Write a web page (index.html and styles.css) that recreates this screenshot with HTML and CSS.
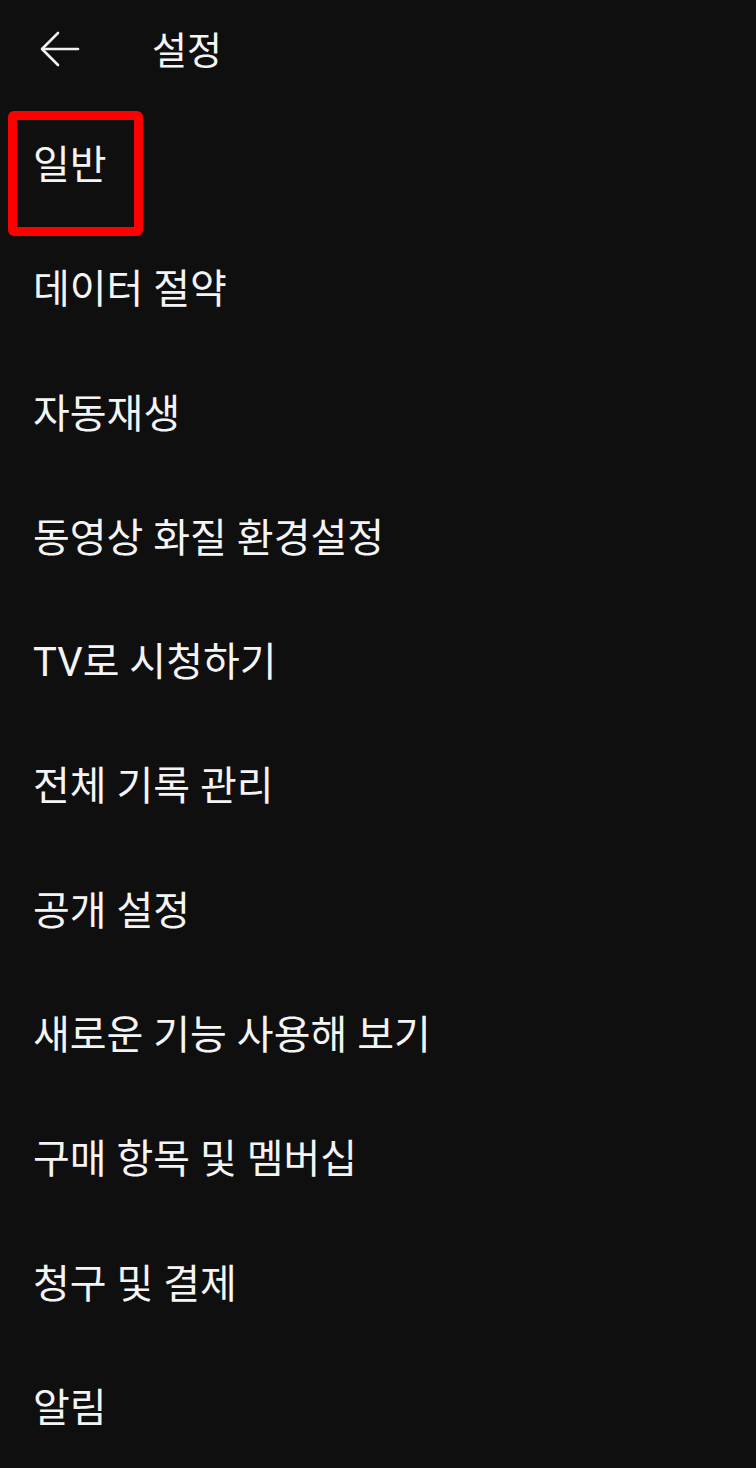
FILE: index.html
```html
<!DOCTYPE html>
<html lang="ko">
<head>
<meta charset="utf-8">
<title>설정</title>
<link rel="stylesheet" href="styles.css">
</head>
<body>
<div class="screen">
  <header class="topbar">
    <span class="back">
      <svg width="40" height="36" viewBox="0 0 40 36" fill="none" stroke="#f1f1f1" stroke-width="2.6" stroke-linecap="round" stroke-linejoin="round">
        <path d="M38 18 H3"/>
        <path d="M18 2 L2 18 L18 34"/>
      </svg>
    </span>
    <h1 class="title">설정</h1>
  </header>
  <ul class="menu">
    <li class="item highlighted">일반<span class="mark"></span></li>
    <li class="item">데이터 절약</li>
    <li class="item">자동재생</li>
    <li class="item">동영상 화질 환경설정</li>
    <li class="item">TV로 시청하기</li>
    <li class="item">전체 기록 관리</li>
    <li class="item">공개 설정</li>
    <li class="item">새로운 기능 사용해 보기</li>
    <li class="item">구매 항목 및 멤버십</li>
    <li class="item">청구 및 결제</li>
    <li class="item">알림</li>
  </ul>
</div>
</body>
</html>
```
FILE: styles.css
```css
html, body {
  margin: 0;
  padding: 0;
  background: #0f0f0f;
}
body {
  font-family: Roboto, "Noto Sans CJK KR", "Noto Sans", sans-serif;
  color: #f4f4f4;
  overflow: hidden;
}
.screen {
  width: 756px;
  height: 1468px;
  background: #0f0f0f;
}
.topbar {
  height: 104px;
  display: flex;
  align-items: center;
}
.back {
  display: flex;
  margin-left: 40px;
  width: 40px;
  height: 36px;
  margin-top: -6px;
}
.title {
  margin: -3px 0 0 72px;
  font-size: 38px;
  font-weight: 400;
  line-height: 1;
}
.menu {
  list-style: none;
  margin: 0;
  padding: 0;
}
.item {
  position: relative;
  height: 124.3px;
  line-height: 124.3px;
  padding-left: 33px;
  font-size: 40px;
  font-weight: 400;
  white-space: nowrap;
}
.mark {
  position: absolute;
  left: 8px;
  top: 7px;
  width: 117px;
  height: 107px;
  border: 9px solid #ff0000;
  border-radius: 6px;
}
```
